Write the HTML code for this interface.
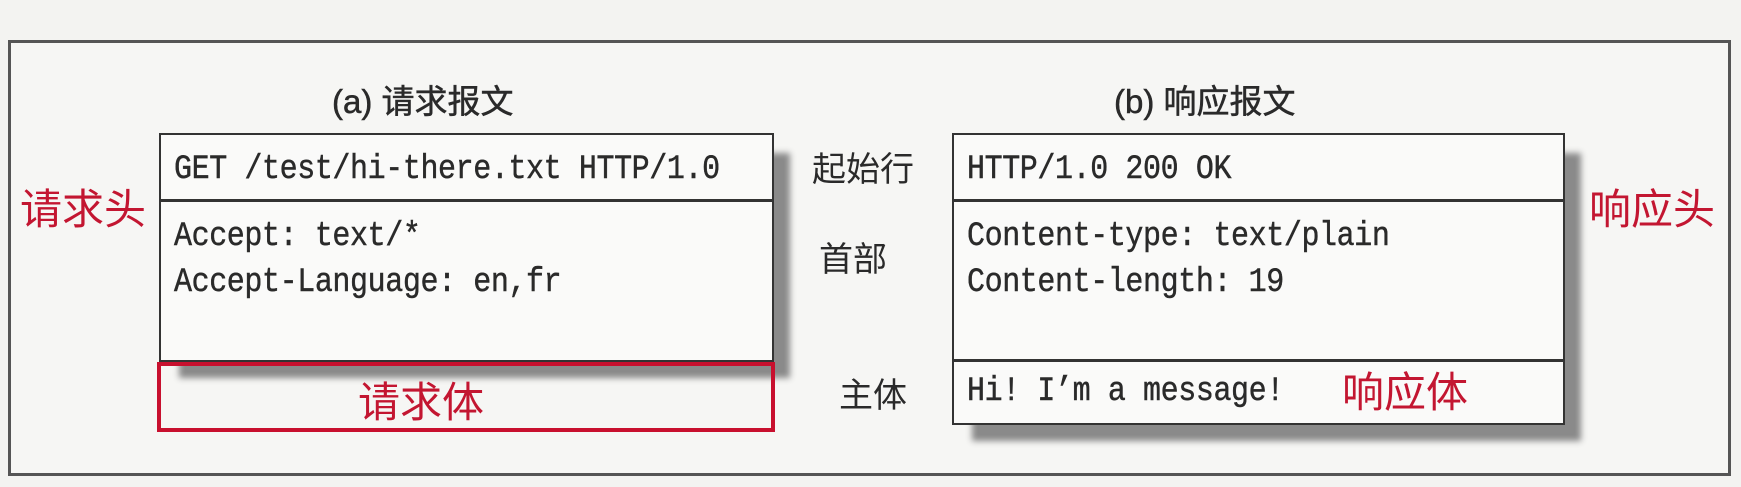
<!DOCTYPE html>
<html><head><meta charset="utf-8"><style>
html,body{margin:0;padding:0;}
body{width:1741px;height:487px;background:#f3f3f1;position:relative;overflow:hidden;font-family:"Liberation Sans","Noto Sans CJK SC",sans-serif;color:#2a2a2a;}
.a{position:absolute;}
.outer{left:8px;top:40px;width:1717px;height:430px;border:3px solid #555;background:#f6f6f4;}
.box{border:2px solid #333;background:#fafaf9;box-shadow:18px 18px 6px -2px #8a8a8a;}
.mono{font-family:"Liberation Mono",monospace;font-size:30px;color:#2a2a2a;white-space:pre;letter-spacing:-0.4px;line-height:40px;transform:scaleY(1.15);transform-origin:0 50%;-webkit-text-stroke:0.4px #2a2a2a;}
.hr{height:3px;background:#333;}
.red{color:#c31631;font-family:"Liberation Sans","Noto Sans CJK SC",sans-serif;font-size:42px;line-height:1;}
.lab{font-size:34px;color:#2a2a2a;line-height:1;font-family:"Noto Sans CJK SC",sans-serif;}
.title{font-size:33px;color:#2a2a2a;line-height:1;font-family:"Liberation Sans","Noto Sans CJK SC",sans-serif;-webkit-text-stroke:0.5px #2a2a2a;}
</style></head><body>
<div class="a outer"></div>
<div class="a title" style="left:332px;top:85px;">(a) 请求报文</div>
<div class="a title" style="left:1114px;top:85px;">(b) 响应报文</div>

<div class="a box" style="left:159px;top:133px;width:611px;height:225px;"></div>
<div class="a hr" style="left:159px;top:199px;width:615px;"></div>
<div class="a mono" style="left:174px;top:150px;">GET /test/hi-there.txt HTTP/1.0</div>
<div class="a mono" style="left:174px;top:220px;">Accept: text/*
Accept-Language: en,fr</div>
<div class="a" style="left:157px;top:362px;width:610px;height:62px;border:4px solid #c8102e;"></div>
<div class="a red" style="left:358px;top:382px;">请求体</div>
<div class="a red" style="left:20px;top:189px;">请求头</div>

<div class="a lab" style="left:812px;top:150px;">起始行</div>
<div class="a lab" style="left:819px;top:240px;">首部</div>
<div class="a lab" style="left:839px;top:376px;">主体</div>

<div class="a box" style="left:952px;top:133px;width:609px;height:288px;"></div>
<div class="a hr" style="left:952px;top:199px;width:613px;"></div>
<div class="a hr" style="left:952px;top:359px;width:613px;"></div>
<div class="a mono" style="left:967px;top:150px;">HTTP/1.0 200 OK</div>
<div class="a mono" style="left:967px;top:220px;">Content-type: text/plain
Content-length: 19</div>
<div class="a mono" style="left:967px;top:372px;">Hi! I’m a message!</div>
<div class="a red" style="left:1342px;top:372px;">响应体</div>
<div class="a red" style="left:1589px;top:189px;">响应头</div>
</body></html>
